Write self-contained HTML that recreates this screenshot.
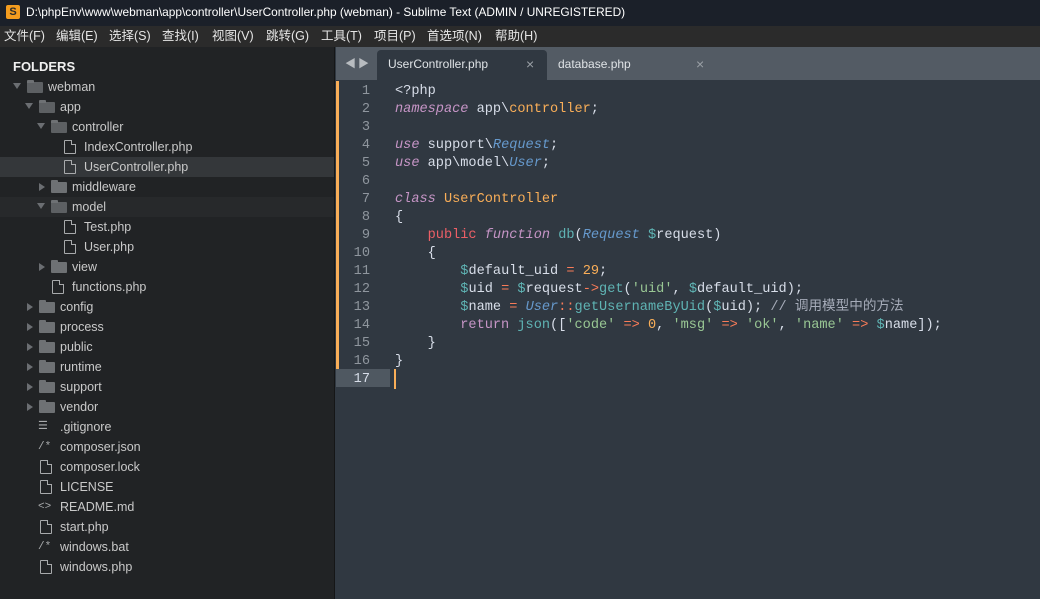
<!DOCTYPE html>
<html><head><meta charset="utf-8">
<style>
*{margin:0;padding:0;box-sizing:border-box}
body{width:1040px;height:599px;overflow:hidden;background:#303841;font-family:"Liberation Sans","Noto Sans CJK SC",sans-serif;position:relative}
#title{position:absolute;left:0;top:0;width:1040px;height:26px;background:#1b2029;color:#fff;font-size:11.9px;line-height:24px;padding-left:26px}
#logo{position:absolute;left:6px;top:5px;width:14px;height:14px;background:#f39c1f;border-radius:2px;color:#2a2a2a;font-size:11px;font-weight:bold;line-height:14px;text-align:center}
#menu{position:absolute;left:0;top:26px;width:1040px;height:21px;background:#2b2b2b;color:#e6e6e6;font-size:12.5px;line-height:21px}
#menu span{position:absolute;top:0}
#side{position:absolute;left:0;top:47px;width:335px;height:552px;background:#212325;border-right:1px solid #151617}
#side .h{position:absolute;left:13px;top:12px;color:#f0f0f0;font-weight:bold;font-size:13px}
.r{position:absolute;left:0;width:334px;height:20px;color:#c9c9c9;font-size:12.5px;line-height:21px}
.r.sel{background:#34373a}
.r.sub{background:#27292b}
.r .t{position:absolute}
.ar{position:absolute;top:6px;width:0;height:0}
.ar.d{border-left:4px solid transparent;border-right:4px solid transparent;border-top:6px solid #6b6e72}
.ar.rt{border-top:4px solid transparent;border-bottom:4px solid transparent;border-left:6px solid #6b6e72;top:6px}
.fo{position:absolute;top:5px;width:16px;height:11px;background:#6e7174;border-radius:1px}
.fo:before{content:"";position:absolute;left:0;top:-2px;width:7px;height:3px;background:#6e7174;border-radius:1px 1px 0 0}
.fo.o{background:#5d6063}
.fi{position:absolute;top:3px;width:12px;height:14px;border:1px solid #a8aaac;border-radius:1px}
.fi:after{content:"";position:absolute;right:-1px;top:-1px;width:4px;height:4px;background:#212325;border-left:1px solid #a8aaac;border-bottom:1px solid #a8aaac}
.r.sel .fi:after{background:#34373a}
.gl{position:absolute;top:0;color:#a8aaac;font-size:11px;font-family:"Liberation Mono",monospace}
#tabs{position:absolute;left:336px;top:47px;width:704px;height:33px;background:#535b64}
#tabs .nav{position:absolute;left:9px;top:8px;color:#b8bcc0;font-size:11px;letter-spacing:2px}
.tab{position:absolute;top:3px;height:30px;font-size:12px;line-height:28px;color:#dfe3e6}
.tab .x{position:absolute;top:0;color:#9aa0a6;font-size:14px}
#code{position:absolute;left:336px;top:83px;font-family:"Liberation Mono",monospace;font-size:13.6px;line-height:18px;color:#d8dee9}
.ln{position:absolute;left:0;width:34px;text-align:right;color:#8f969e}
.cl{position:absolute;left:59px;white-space:pre}
.k{color:#c695c6;font-style:italic}
.o{color:#f9ae58}
.c{color:#6699cc;font-style:italic}
.v{color:#5fb4b4}
.p{color:#ec5f66}
.s{color:#99c794}
.op{color:#f97b58}
.cm{color:#a6acb9}
.f{color:#5fb4b4}
</style></head><body>
<div id="title"><div id="logo">S</div>D:\phpEnv\www\webman\app\controller\UserController.php (webman) - Sublime Text (ADMIN / UNREGISTERED)</div>
<div id="menu">
<span style="left:4px">文件(F)</span><span style="left:56px">编辑(E)</span><span style="left:109px">选择(S)</span><span style="left:162px">查找(I)</span><span style="left:212px">视图(V)</span><span style="left:266px">跳转(G)</span><span style="left:321px">工具(T)</span><span style="left:374px">项目(P)</span><span style="left:427px">首选项(N)</span><span style="left:495px">帮助(H)</span>
</div>
<div id="side">
<div class="h">FOLDERS</div>
<div class="r" style="top:30px"><i class="ar d" style="left:13px"></i><i class="fo o" style="left:27px"></i><span class="t" style="left:48px">webman</span></div>
<div class="r" style="top:50px"><i class="ar d" style="left:25px"></i><i class="fo o" style="left:39px"></i><span class="t" style="left:60px">app</span></div>
<div class="r" style="top:70px"><i class="ar d" style="left:37px"></i><i class="fo o" style="left:51px"></i><span class="t" style="left:72px">controller</span></div>
<div class="r" style="top:90px"><i class="fi" style="left:64px"></i><span class="t" style="left:84px">IndexController.php</span></div>
<div class="r sel" style="top:110px"><i class="fi" style="left:64px"></i><span class="t" style="left:84px">UserController.php</span></div>
<div class="r" style="top:130px"><i class="ar rt" style="left:39px"></i><i class="fo" style="left:51px"></i><span class="t" style="left:72px">middleware</span></div>
<div class="r sub" style="top:150px"><i class="ar d" style="left:37px"></i><i class="fo o" style="left:51px"></i><span class="t" style="left:72px">model</span></div>
<div class="r" style="top:170px"><i class="fi" style="left:64px"></i><span class="t" style="left:84px">Test.php</span></div>
<div class="r" style="top:190px"><i class="fi" style="left:64px"></i><span class="t" style="left:84px">User.php</span></div>
<div class="r" style="top:210px"><i class="ar rt" style="left:39px"></i><i class="fo" style="left:51px"></i><span class="t" style="left:72px">view</span></div>
<div class="r" style="top:230px"><i class="fi" style="left:52px"></i><span class="t" style="left:72px">functions.php</span></div>
<div class="r" style="top:250px"><i class="ar rt" style="left:27px"></i><i class="fo" style="left:39px"></i><span class="t" style="left:60px">config</span></div>
<div class="r" style="top:270px"><i class="ar rt" style="left:27px"></i><i class="fo" style="left:39px"></i><span class="t" style="left:60px">process</span></div>
<div class="r" style="top:290px"><i class="ar rt" style="left:27px"></i><i class="fo" style="left:39px"></i><span class="t" style="left:60px">public</span></div>
<div class="r" style="top:310px"><i class="ar rt" style="left:27px"></i><i class="fo" style="left:39px"></i><span class="t" style="left:60px">runtime</span></div>
<div class="r" style="top:330px"><i class="ar rt" style="left:27px"></i><i class="fo" style="left:39px"></i><span class="t" style="left:60px">support</span></div>
<div class="r" style="top:350px"><i class="ar rt" style="left:27px"></i><i class="fo" style="left:39px"></i><span class="t" style="left:60px">vendor</span></div>
<div class="r" style="top:370px"><span class="gl" style="left:38px">☰</span><span class="t" style="left:60px">.gitignore</span></div>
<div class="r" style="top:390px"><span class="gl" style="left:38px">/*</span><span class="t" style="left:60px">composer.json</span></div>
<div class="r" style="top:410px"><i class="fi" style="left:40px"></i><span class="t" style="left:60px">composer.lock</span></div>
<div class="r" style="top:430px"><i class="fi" style="left:40px"></i><span class="t" style="left:60px">LICENSE</span></div>
<div class="r" style="top:450px"><span class="gl" style="left:38px">&lt;&gt;</span><span class="t" style="left:60px">README.md</span></div>
<div class="r" style="top:470px"><i class="fi" style="left:40px"></i><span class="t" style="left:60px">start.php</span></div>
<div class="r" style="top:490px"><span class="gl" style="left:38px">/*</span><span class="t" style="left:60px">windows.bat</span></div>
<div class="r" style="top:510px"><i class="fi" style="left:40px"></i><span class="t" style="left:60px">windows.php</span></div>
</div>
<div id="tabs">
<div class="nav">◀▶</div>
<div class="tab" style="left:41px;width:170px;background:#303841;border-radius:4px 4px 0 0"><span style="position:absolute;left:11px">UserController.php</span><span class="x" style="left:149px">×</span></div>
<div class="tab" style="left:211px;width:170px"><span style="position:absolute;left:11px">database.php</span><span class="x" style="left:149px">×</span></div>
</div>
<div style="position:absolute;left:336px;top:81px;width:3px;height:288px;background:#f9ae58"></div>
<div style="position:absolute;left:336px;top:369px;width:54px;height:18px;background:#4f5861"></div>
<div style="position:absolute;left:394px;top:369px;width:2px;height:20px;background:#f9ae58"></div>
<div id="code">
<div class="ln" style="top:0">1</div><div class="cl" style="top:0">&lt;?php</div>
<div class="ln" style="top:18px">2</div><div class="cl" style="top:18px"><span class="k">namespace</span> app\<span class="o">controller</span>;</div>
<div class="ln" style="top:36px">3</div>
<div class="ln" style="top:54px">4</div><div class="cl" style="top:54px"><span class="k">use</span> support\<span class="c">Request</span>;</div>
<div class="ln" style="top:72px">5</div><div class="cl" style="top:72px"><span class="k">use</span> app\model\<span class="c">User</span>;</div>
<div class="ln" style="top:90px">6</div>
<div class="ln" style="top:108px">7</div><div class="cl" style="top:108px"><span class="k">class</span> <span class="o">UserController</span></div>
<div class="ln" style="top:126px">8</div><div class="cl" style="top:126px">{</div>
<div class="ln" style="top:144px">9</div><div class="cl" style="top:144px">    <span class="p">public</span> <span class="k">function</span> <span class="f">db</span>(<span class="c">Request</span> <span class="v">$</span>request)</div>
<div class="ln" style="top:162px">10</div><div class="cl" style="top:162px">    {</div>
<div class="ln" style="top:180px">11</div><div class="cl" style="top:180px">        <span class="v">$</span>default_uid <span class="op">=</span> <span class="o">29</span>;</div>
<div class="ln" style="top:198px">12</div><div class="cl" style="top:198px">        <span class="v">$</span>uid <span class="op">=</span> <span class="v">$</span>request<span class="op">-&gt;</span><span class="f">get</span>(<span class="s">'uid'</span>, <span class="v">$</span>default_uid);</div>
<div class="ln" style="top:216px">13</div><div class="cl" style="top:216px">        <span class="v">$</span>name <span class="op">=</span> <span class="c">User</span><span class="op">::</span><span class="f">getUsernameByUid</span>(<span class="v">$</span>uid); <span class="cm">// 调用模型中的方法</span></div>
<div class="ln" style="top:234px">14</div><div class="cl" style="top:234px">        <span class="k" style="font-style:normal">return</span> <span class="f">json</span>([<span class="s">'code'</span> <span class="op">=&gt;</span> <span class="o">0</span>, <span class="s">'msg'</span> <span class="op">=&gt;</span> <span class="s">'ok'</span>, <span class="s">'name'</span> <span class="op">=&gt;</span> <span class="v">$</span>name]);</div>
<div class="ln" style="top:252px">15</div><div class="cl" style="top:252px">    }</div>
<div class="ln" style="top:270px">16</div><div class="cl" style="top:270px">}</div>
<div class="ln" style="top:288px;color:#d8dee9">17</div>
</div>
</body></html>
